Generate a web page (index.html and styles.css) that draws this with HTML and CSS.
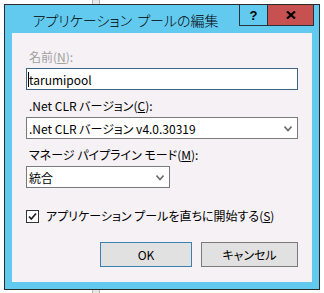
FILE: index.html
```html
<!DOCTYPE html>
<html lang="ja">
<head>
  <meta charset="UTF-8" />
  <title>アプリケーション プールの編集</title>
  <link rel="stylesheet" href="styles.css">
</head>
<body>

  <!-- 背後のウィンドウのスクロールバー -->
  <div class="backdrop-bar"></div>

  <div class="window">
    <div class="titlebar">
      <div class="title">アプリケーション プールの編集</div>
      <div class="caption">
        <div class="cap-btn cap-help">?</div>
        <div class="cap-btn cap-close">
          <svg width="10" height="8" viewBox="0 0 10 8">
            <path d="M1 0.5 L9 7.5 M9 0.5 L1 7.5" stroke="#000" stroke-width="2.2" fill="none"/>
          </svg>
        </div>
      </div>
    </div>

    <div class="client">
      <div class="field">
        <div class="label disabled">名前(<u>N</u>):</div>
        <div class="text-field focused"><span class="caret"></span>tarumipool</div>
      </div>

      <div class="field">
        <div class="label">.Net CLR バージョン(<u>C</u>):</div>
        <div class="combo combo-wide">
          <span>.Net CLR バージョン v4.0.30319</span>
          <svg class="chevron" width="8" height="6" viewBox="0 0 8 6">
            <path d="M0.5 0.5 L4 4.5 L7.5 0.5" stroke="#6d6d6d" stroke-width="1.6" fill="none"/>
          </svg>
        </div>
      </div>

      <div class="field">
        <div class="label">マネージ パイプライン モード(<u>M</u>):</div>
        <div class="combo combo-narrow">
          <span>統合</span>
          <svg class="chevron" width="8" height="6" viewBox="0 0 8 6">
            <path d="M0.5 0.5 L4 4.5 L7.5 0.5" stroke="#6d6d6d" stroke-width="1.6" fill="none"/>
          </svg>
        </div>
      </div>

      <label class="check-row">
        <span class="checkbox">
          <svg width="11" height="11" viewBox="0 0 11 11">
            <path d="M2 5.5 L4.3 8 L9 2.5" stroke="#222" stroke-width="1.8" fill="none"/>
          </svg>
        </span>
        アプリケーション プールを直ちに開始する(<u>S</u>)
      </label>

      <div class="actions">
        <button class="btn btn-ok">OK</button>
        <button class="btn btn-cancel">キャンセル</button>
      </div>
    </div>
  </div>

</body>
</html>
```

FILE: styles.css
```css
:root {
  --frame: #62c9ef;
  --client-bg: #f5f1f5;
  --border-dark: #2b2b2b;
}
body {
  margin: 0;
  background: #fff;
  font-family: "Noto Sans CJK JP", "Noto Sans", sans-serif;
  font-size: 12px;
  color: #000;
  position: relative;
  height: 293px;
  overflow: hidden;
}
.backdrop-bar {
  position: absolute;
  left: 92px;
  top: 0;
  width: 6px;
  height: 293px;
  background: #e8e8e8;
  border: 1px solid #b5b5b5;
  border-top: 0;
}
.window {
  position: relative;
  margin: 4px 0 0 4px;
  width: 314px;
  height: 284px;
  border: 1px solid var(--border-dark);
  background: var(--frame);
  display: flex;
  flex-direction: column;
}
.titlebar {
  height: 28px;
  display: flex;
  align-items: flex-start;
}
.title {
  flex: 1;
  text-align: center;
  font-size: 14px;
  font-weight: 300;
  line-height: 28px;
  padding: 1px 0 0 7px;
  word-spacing: 2px;
  font-feature-settings: "palt";
}
.caption {
  display: flex;
  margin-right: 5px;
}
.cap-btn {
  height: 20px;
  border: 1px solid #26333d;
  border-top: 0;
  display: flex;
  align-items: center;
  justify-content: center;
}
.cap-help {
  width: 27px;
  border-right: 0;
  font-family: "Liberation Sans", sans-serif;
  font-weight: bold;
  font-size: 13px;
}
.cap-close {
  width: 45px;
  background: #c75050;
}
.client {
  margin: 0 7px;
  height: 249px;
  box-sizing: border-box;
  background: var(--client-bg);
  padding: 16px 14px 0;
  display: flex;
  flex-direction: column;
}
.field {
  margin-bottom: 8px;
}
.label {
  line-height: 16px;
  height: 16px;
  margin: 0 0 3px 3px;
  font-feature-settings: "palt";
}
.label.disabled {
  color: #a0a0a0;
}
.text-field, .combo {
  height: 22px;
  box-sizing: border-box;
  background: #fff;
  border: 1px solid #7a7a7a;
  display: flex;
  align-items: center;
  padding-left: 2px;
  font-feature-settings: "palt";
}
.text-field.focused {
  border-color: #3a6688;
  padding-left: 0;
}
.caret {
  display: inline-block;
  width: 1px;
  height: 15px;
  background: #000;
  margin: 0 0 0 1px;
}
.combo {
  justify-content: space-between;
  padding-right: 5px;
}
.combo-narrow {
  width: 144px;
}
.chevron {
  margin-top: 1px;
}
.check-row {
  display: flex;
  align-items: center;
  line-height: 16px;
  margin-top: 12px;
  font-feature-settings: "palt";
}
.checkbox {
  width: 11px;
  height: 11px;
  border: 1px solid #333;
  background: #fff;
  display: flex;
  margin-right: 7px;
}
.actions {
  display: flex;
  justify-content: flex-end;
  gap: 9px;
  margin-top: 18px;
}
.btn {
  height: 25px;
  box-sizing: border-box;
  background: #e1e1e1;
  border: 1px solid #7a7a7a;
  font-family: inherit;
  font-size: 12px;
  padding: 0;
  font-feature-settings: "palt";
}
.btn-ok {
  width: 92px;
  border-color: #3c7fb1;
}
.btn-cancel {
  width: 97px;
}
```
